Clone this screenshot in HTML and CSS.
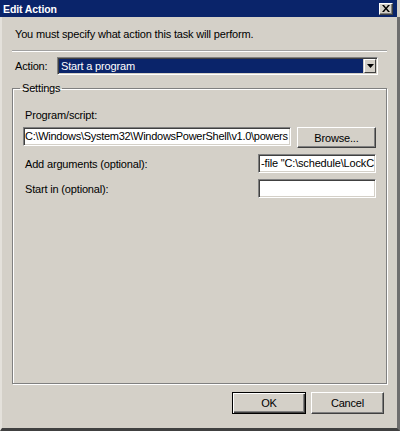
FILE: index.html
```html
<!DOCTYPE html>
<html>
<head>
<meta charset="utf-8">
<link rel="stylesheet" href="styles.css">
</head>
<body>
<div class="dialog">
  <div class="titlebar">
    <span class="title">Edit Action</span>
    <span class="close"><svg width="8" height="7" viewBox="0 0 8 7"><path d="M0 0h2l2 2.5L6 0h2L5 3.5 8 7H6L4 4.5 2 7H0l3-3.5z" fill="#000"/></svg></span>
  </div>
  <div class="body">
    <p class="intro">You must specify what action this task will perform.</p>
    <div class="sep"></div>
    <div class="action-row">
      <span class="action-label">Action:</span>
      <div class="combo">
        <span class="combo-val">Start a program</span>
        <span class="combo-btn"><svg width="7" height="4" viewBox="0 0 7 4"><path d="M0 0h7L3.5 4z" fill="#000"/></svg></span>
      </div>
    </div>
    <fieldset class="group">
      <legend>Settings</legend>
      <div class="label">Program/script:</div>
      <div class="prog-row">
        <div class="field prog">C:\Windows\System32\WindowsPowerShell\v1.0\powers</div>
        <div class="btn browse">Browse...</div>
      </div>
      <div class="arg-row">
        <span>Add arguments (optional):</span>
        <div class="field small">-file "C:\schedule\LockC</div>
      </div>
      <div class="arg-row">
        <span>Start in (optional):</span>
        <div class="field small"></div>
      </div>
    </fieldset>
    <div class="footer">
      <div class="btn ok">OK</div>
      <div class="btn cancel">Cancel</div>
    </div>
  </div>
</div>
</body>
</html>
```

FILE: styles.css
```css
* { box-sizing: border-box; }
html, body { margin: 0; padding: 0; }
body {
  width: 400px;
  height: 431px;
  background: #d4d0c8;
  font-family: "Liberation Sans", Arial, sans-serif;
  font-size: 11px;
  letter-spacing: -0.17px;
  color: #000;
  overflow: hidden;
}
.dialog {
  width: 400px;
  height: 431px;
  display: flex;
  flex-direction: column;
  background: #d4d0c8;
}
.titlebar {
  height: 17px;
  flex: none;
  background: #0a246a;
  display: flex;
  align-items: center;
  justify-content: space-between;
  padding: 0 4px 0 3px;
  margin-right: 3px;
}
.title {
  color: #fff;
  font-weight: bold;
  font-size: 10.5px;
  letter-spacing: -0.1px;
}
.close {
  width: 14px;
  height: 12px;
  background: #d4d0c8;
  border-top: 1px solid #fff;
  border-left: 1px solid #fff;
  border-right: 1px solid #404040;
  border-bottom: 1px solid #404040;
  box-shadow: inset -1px -1px 0 #808080;
  display: flex;
  align-items: center;
  justify-content: center;
  padding-bottom: 1px;
}
.body {
  flex: 1;
  display: flex;
  flex-direction: column;
  padding: 0 10px 14px 10px;
  border-left: 2px solid #e4e1db;
  border-right: 3px solid #6e6e6e;
  border-bottom: 3px solid #404040;
}
.intro {
  margin: 10px 0 0 3px;
  line-height: 14px;
}
.sep {
  margin-top: 9px;
  height: 2px;
  border-top: 1px solid #a0a0a0;
  border-bottom: 1px solid #fff;
}
.action-row {
  margin-top: 5px;
  display: flex;
  align-items: center;
  height: 18px;
}
.action-label {
  width: 45px;
  padding-left: 3px;
}
.combo {
  width: 321px;
  height: 18px;
  display: flex;
  border-top: 1px solid #808080;
  border-left: 1px solid #808080;
  border-right: 1px solid #fff;
  border-bottom: 1px solid #fff;
  box-shadow: inset 1px 1px 0 #404040;
  padding: 1px;
}
.combo-val {
  flex: 1;
  background: #0a246a;
  color: #fff;
  line-height: 14px;
  padding-left: 2px;
  margin: 0 1px 0 0;
}
.combo-btn {
  width: 12px;
  background: #d4d0c8;
  border-top: 1px solid #fff;
  border-left: 1px solid #fff;
  border-right: 1px solid #404040;
  border-bottom: 1px solid #404040;
  display: flex;
  align-items: center;
  justify-content: center;
}
.group {
  flex: 1;
  margin: 6px 0 0 0;
  padding: 0 10px;
  border: 1px solid #808080;
  box-shadow: 1px 1px 0 #fff, inset 1px 1px 0 #fff;
  min-width: 0;
}
.group legend {
  padding: 0 2px;
  margin-left: -3px;
  line-height: 14px;
}
.label {
  margin-top: 13px;
  line-height: 14px;
  padding-left: 2px;
}
.prog-row {
  margin-top: 5px;
  display: flex;
  align-items: flex-start;
  justify-content: space-between;
}
.field {
  height: 19px;
  background: #fff;
  border-top: 1px solid #808080;
  border-left: 1px solid #808080;
  border-right: 1px solid #fff;
  border-bottom: 1px solid #fff;
  box-shadow: inset 1px 1px 0 #404040, inset -1px -1px 0 #d4d0c8;
  white-space: nowrap;
  overflow: hidden;
  line-height: 15px;
  padding: 1px 1px 1px 2px;
}
.prog {
  width: 268px;
  letter-spacing: -0.28px;
  padding-left: 1px;
}
.small { width: 118px; }
.btn {
  background: #d4d0c8;
  border-top: 1px solid #fff;
  border-left: 1px solid #fff;
  border-right: 1px solid #404040;
  border-bottom: 1px solid #404040;
  box-shadow: inset -1px -1px 0 #808080;
  display: flex;
  align-items: center;
  justify-content: center;
}
.browse {
  width: 79px;
  height: 21px;
}
.arg-row {
  margin-top: 6px;
  display: flex;
  align-items: center;
  justify-content: space-between;
  padding-left: 2px;
}
.footer {
  flex: none;
  margin-top: 8px;
  display: flex;
  justify-content: flex-end;
  gap: 5px;
  padding-right: 3px;
}
.footer .btn {
  height: 22px;
  width: 73px;
}
.footer .ok {
  width: 74px;
  border: 1px solid #000;
  box-shadow: inset 1px 1px 0 #fff, inset -1px -1px 0 #404040, inset -2px -2px 0 #808080;
}
```
